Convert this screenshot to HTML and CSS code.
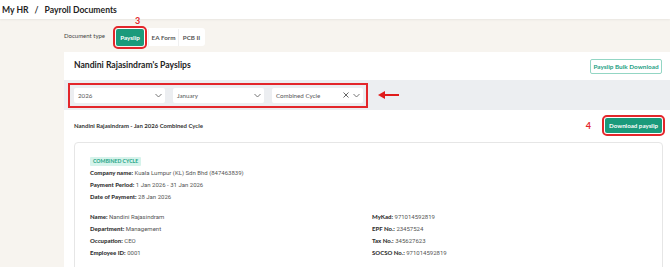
FILE: index.html
```html
<!DOCTYPE html>
<html lang="en">
<head>
    <meta charset="UTF-8">
    <meta name="viewport" content="width=device-width, initial-scale=1.0">
    <link rel="stylesheet" href="styles.css">
    <title>My HR - Payroll Documents</title>
</head>
<body>
  <div id="topbar">
    <span>My HR</span>
    <span class="crumb-sep">/</span>
    <span>Payroll Documents</span>
  </div>
  <div id="page">
    <div id="doc-type">
      <span class="doc-label">Document type</span>
      <div class="segment">
        <span class="step step-3">3</span>
        <button class="seg-btn active">Payslip</button>
        <button class="seg-btn">EA Form</button>
        <button class="seg-btn">PCB II</button>
      </div>
    </div>

    <div id="card">
      <div class="card-head">
        <h2 class="card-title">Nandini Rajasindram's Payslips</h2>
        <button class="bulk-btn">Payslip Bulk Download</button>
      </div>

      <div class="filters">
        <div class="filter-group marked">
          <div class="select">
            <span>2026</span>
            <span class="select-icons">
              <svg class="chev" width="7" height="5" viewBox="0 0 7 5"><path d="M0.5 1L3.5 4L6.5 1" fill="none" stroke="#666" stroke-width="0.9"/></svg>
            </span>
          </div>
          <div class="select">
            <span>January</span>
            <span class="select-icons">
              <svg class="chev" width="7" height="5" viewBox="0 0 7 5"><path d="M0.5 1L3.5 4L6.5 1" fill="none" stroke="#666" stroke-width="0.9"/></svg>
            </span>
          </div>
          <div class="select">
            <span>Combined Cycle</span>
            <span class="select-icons">
              <svg width="6" height="6" viewBox="0 0 6 6"><path d="M0.5 0.5L5.5 5.5M5.5 0.5L0.5 5.5" stroke="#555" stroke-width="0.9"/></svg>
              <svg class="chev" width="7" height="5" viewBox="0 0 7 5"><path d="M0.5 1L3.5 4L6.5 1" fill="none" stroke="#666" stroke-width="0.9"/></svg>
            </span>
          </div>
        </div>
        <svg class="arrow" width="22" height="8" viewBox="0 0 22 8"><path d="M21 4H6" stroke="#e01b1b" stroke-width="2"/><path d="M0 4L7 0V8Z" fill="#e01b1b"/></svg>
      </div>

      <div class="cycle-row">
        <span class="cycle-title">Nandini Rajasindram - Jan 2026 Combined Cycle</span>
        <div class="cycle-actions">
          <span class="step">4</span>
          <button class="download-btn marked">Download payslip</button>
        </div>
      </div>

      <div class="slip">
        <span class="badge">COMBINED CYCLE</span>
        <div class="slip-lines">
          <p><b>Company name:</b> Kuala Lumpur (KL) Sdn Bhd (847463839)</p>
          <p><b>Payment Period:</b> 1 Jan 2026 - 31 Jan 2026</p>
          <p><b>Date of Payment:</b> 28 Jan 2026</p>
        </div>
        <div class="slip-grid">
          <div class="slip-lines">
            <p><b>Name:</b> Nandini Rajasindram</p>
            <p><b>Department:</b> Management</p>
            <p><b>Occupation:</b> CEO</p>
            <p><b>Employee ID:</b> 0001</p>
          </div>
          <div class="slip-lines">
            <p><b>MyKad:</b> 971014592819</p>
            <p><b>EPF No.:</b> 23457524</p>
            <p><b>Tax No.:</b> 345627623</p>
            <p><b>SOCSO No.:</b> 971014592819</p>
          </div>
        </div>
      </div>
    </div>
  </div>
</body>
</html>
```

FILE: styles.css
```css
html, body {
    margin: 0;
    padding: 0;
    background-color: #F7F4EF;
    font-family: 'Lato', 'Liberation Sans', Arial, sans-serif;
    color: #2b2b2b;
    overflow: hidden;
}

#topbar {
    background-color: #FFFFFF;
    height: 19px;
    padding-left: 2px;
    display: flex;
    align-items: center;
    gap: 5px;
    font-size: 8.6px;
    font-weight: 700;
    color: #1f1f1f;
    box-shadow: 0 1px 2px rgba(0,0,0,0.06);
}

.crumb-sep {
    margin: 0 1px;
}

#page {
    padding-left: 64px;
}

#doc-type {
    display: flex;
    align-items: center;
    gap: 9px;
    padding-top: 9px;
    height: 18px;
}

.doc-label {
    font-size: 6px;
    color: #444;
    margin-top: -3px;
}

.segment {
    position: relative;
    display: flex;
    align-items: center;
    background-color: #FFFFFF;
    border-radius: 3px;
    padding: 0 1px 0 2px;
    height: 18px;
}

.seg-btn {
    border: none;
    background: none;
    font-family: 'Lato', Arial, sans-serif;
    font-size: 6.3px;
    font-weight: 700;
    color: #555;
    padding: 0;
    height: 17px;
    border-radius: 2px;
    width: 30px;
}

.seg-btn + .seg-btn {
    border-left: 1px solid #f0f0f0;
    border-radius: 0;
}

.seg-btn.active {
    background-color: #1A9A7B;
    color: #FFFFFF;
    width: 28px;
    margin-right: 4px;
    outline: 2px solid #E3262B;
    outline-offset: 1px;
}

.seg-btn:last-child {
    width: 26px;
}

.step {
    color: #E3262B;
    font-size: 9px;
    font-weight: 700;
}

/* annotation number above the active tab */
.step-3 {
    position: absolute;
    left: 21px;
    top: -13px;
}

#card {
    background-color: #FFFFFF;
    margin-top: 6px;
}

.card-head {
    display: flex;
    justify-content: space-between;
    align-items: center;
    height: 28px;
    padding: 0 8px 0 10px;
}

.card-title {
    margin: 0 0 2px;
    font-size: 8.6px;
    font-weight: 700;
    color: #222;
}

.bulk-btn {
    background-color: #FFFFFF;
    border: 1px solid #93D6C4;
    color: #23A083;
    border-radius: 2px;
    font-family: 'Lato', Arial, sans-serif;
    font-size: 6.4px;
    font-weight: 700;
    height: 15px;
    width: 72px;
    padding: 0;
    margin-top: 1px;
}

.filters {
    background-color: #ECEEF1;
    height: 30px;
    display: flex;
    align-items: center;
    padding-left: 5px;
    gap: 11px;
}

.filter-group {
    display: flex;
    gap: 8px;
    padding: 4px 4px 4px 5px;
}

.marked {
    outline: 2px solid #E3262B;
    outline-offset: 1px;
}

.filter-group.marked {
    outline-offset: -1px;
}

.select {
    background-color: #FFFFFF;
    width: 91px;
    height: 15px;
    border-radius: 2px;
    box-sizing: border-box;
    padding: 0 3px 0 4px;
    display: flex;
    justify-content: space-between;
    align-items: center;
    font-size: 6.2px;
    color: #555;
}

.select-icons {
    display: flex;
    align-items: center;
    gap: 4px;
}

.cycle-row {
    display: flex;
    justify-content: space-between;
    align-items: center;
    height: 30px;
    padding: 0 8px 0 10px;
}

.cycle-title {
    font-size: 6px;
    font-weight: 700;
    color: #333;
}

.cycle-actions {
    display: flex;
    align-items: center;
    gap: 14px;
}

.download-btn {
    background-color: #1A9A7B;
    color: #FFFFFF;
    border: none;
    border-radius: 2px;
    font-family: 'Lato', Arial, sans-serif;
    font-size: 6.2px;
    font-weight: 700;
    height: 15px;
    width: 57px;
    padding: 0;
}

.slip {
    margin: 2px 7px 0 10px;
    border: 1px solid #E6E6E6;
    border-radius: 4px;
    padding: 14px 15px 12px;
    height: 200px;
}

.badge {
    display: block;
    width: fit-content;
    background-color: #D6F3EB;
    color: #22A384;
    font-size: 5.2px;
    font-weight: 700;
    line-height: 9px;
    padding: 0 3px;
    border-radius: 1px;
}

.slip-lines p {
    margin: 0;
    height: 12px;
    line-height: 12px;
    font-family: 'Roboto', 'Liberation Sans', sans-serif;
    font-size: 6px;
    color: #555;
}

.slip-lines p b {
    font-family: 'Lato', Arial, sans-serif;
    font-weight: 900;
    color: #333;
}

.slip > .slip-lines {
    margin-top: 1px;
}

.slip-grid {
    display: grid;
    grid-template-columns: 282px 1fr;
    margin-top: 8px;
}
```
